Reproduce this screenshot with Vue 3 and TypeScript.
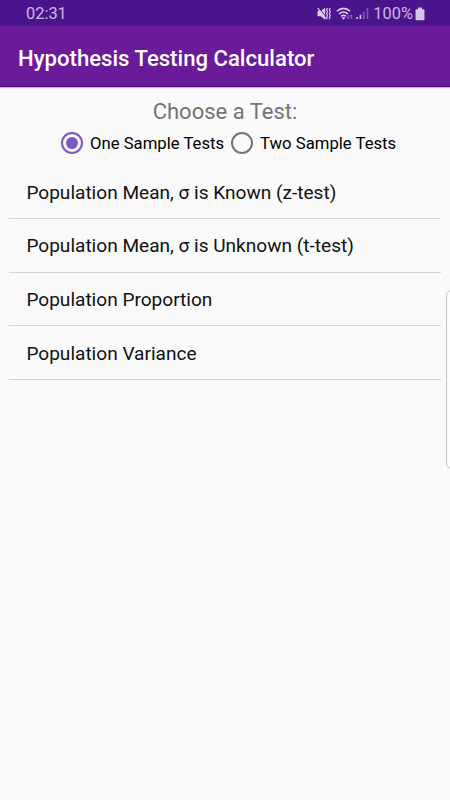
<script setup lang="ts">
import { ref } from 'vue'

const groups: string[] = ['One Sample Tests', 'Two Sample Tests']
const selected = ref<number>(0)
const tests: string[] = [
  'Population Mean, σ is Known (z-test)',
  'Population Mean, σ is Unknown (t-test)',
  'Population Proportion',
  'Population Variance',
]
</script>

<template>
  <div class="screen">
    <div class="status">
      <span class="clock">02:31</span>
      <div class="indicators">
        <svg class="mute" width="15" height="14" viewBox="0 0 15 14">
          <path d="M.5 4h3.200L8.200.8v12L3.700 9.300H.5z" fill="#dccbf0" />
          <path d="M2 .8l7.800 10" stroke="#4a148c" stroke-width="1" />
          <path d="M.7 1.200l8 10.500" stroke="#dccbf0" stroke-width="1.300" />
          <path d="M10.300 1l-.6 1.800.8 1.900-.8 1.900.8 1.900-.8 1.900.6 1.800M13 1l-.6 1.800.8 1.900-.8 1.900.8 1.900-.8 1.900.6 1.800" fill="none" stroke="#dccbf0" stroke-width="1.200" />
        </svg>
        <svg class="wifi" width="18" height="14" viewBox="0 0 18 14">
          <g fill="none" stroke="#dccbf0" stroke-width="1.500">
            <path d="M.8 4.200Q7.500-1.500 14.200 4.200M3 6.900q4.500-3.700 9 0M5 9.300q2.500-2 5 0" />
          </g>
          <path d="M5.700 10.700q1.800-1.200 3.600 0L7.500 12.800z" fill="#dccbf0" />
          <path d="M12 8v4M10.700 10.600L12 12l1.300-1.400M15.300 12V8M14 9.400L15.300 8l1.300 1.400" fill="none" stroke="#8b66b8" stroke-width="1" />
        </svg>
        <svg class="signal" width="13" height="13" viewBox="0 0 13 13">
          <path d="M.3 10h1.700v2H.3zM3.600 7.700h1.700V12H3.600z" fill="#d7c3ec" />
          <path d="M7 4.500h1.700V12H7zM10.600.8h1.700V12h-1.700z" fill="#8058af" />
        </svg>
        <span class="percent">100%</span>
        <svg class="battery" width="10" height="14" viewBox="0 0 10 14">
          <path d="M3 .5h4v1.700h1.500q1 0 1 1v9q0 1-1 1h-7q-1 0-1-1v-9q0-1 1-1H3z" fill="#d7c3ec" />
        </svg>
      </div>
    </div>
    <header class="toolbar"><h1>Hypothesis Testing Calculator</h1></header>
    <main>
      <h2>Choose a Test:</h2>
      <div class="radios" role="radiogroup">
        <div
          v-for="(group, i) in groups"
          :key="group"
          class="radio"
          role="radio"
          :aria-checked="selected === i"
          @click="selected = i"
        >
          <span class="ring" :class="{ checked: selected === i }"></span>
          <span class="radio-label">{{ group }}</span>
        </div>
      </div>
      <ul>
        <li v-for="test in tests" :key="test"><span class="name">{{ test }}</span></li>
      </ul>
    </main>
    <div class="edge-handle"></div>
  </div>
</template>

<style>
body {
  background: #fafafa;
}
</style>

<style scoped>
.screen {
  position: relative;
  width: 450px;
  height: 800px;
  overflow: hidden;
  background: #fafafa;
  font-family: Roboto, sans-serif;
  color: #111;
}
.status {
  display: flex;
  justify-content: space-between;
  align-items: center;
  box-sizing: border-box;
  height: 26px;
  padding: 1px 25px 0 26px;
  background: #4a148c;
  color: #cdb8e6;
  font-size: 16.4px;
  line-height: 24px;
}
.indicators {
  display: flex;
  align-items: center;
}
.wifi {
  margin-left: 4px;
}
.signal {
  margin-left: 2px;
}
.percent {
  margin-left: 4px;
}
.battery {
  margin-left: 2px;
}
.toolbar {
  position: relative;
  display: flex;
  align-items: center;
  box-sizing: border-box;
  height: 61px;
  padding: 4px 18px 0;
  background: #6a1b9a;
  border-bottom: 1px solid #4f1277;
  box-shadow: 0 1px 1px rgba(106, 27, 154, 0.35);
}
h1 {
  margin: 0;
  font-size: 22.13px;
  font-weight: 500;
  line-height: 28px;
  color: #fff;
  white-space: nowrap;
}
h2 {
  margin: 0;
  padding: 11px 0 0;
  font-size: 22px;
  font-weight: 400;
  line-height: 28px;
  text-align: center;
  color: #757575;
}
.radios {
  display: flex;
  padding: 5px 0 0 61px;
  gap: 7px;
}
.radio {
  display: flex;
  align-items: center;
  height: 24px;
}
.ring {
  display: flex;
  align-items: center;
  justify-content: center;
  box-sizing: border-box;
  width: 22px;
  height: 22px;
  border: 2px solid #757575;
  border-radius: 50%;
}
.ring.checked {
  border-color: #7e57c2;
}
.ring.checked::before {
  content: '';
  width: 12px;
  height: 12px;
  border-radius: 50%;
  background: #7e57c2;
}
.radio-label {
  margin-left: 7px;
  padding-top: 2px;
  font-size: 16.7px;
  line-height: 24px;
  color: #000;
  white-space: nowrap;
}
ul {
  margin: 0;
  padding: 10px 9px 0;
  list-style: none;
}
li {
  display: flex;
  align-items: center;
  box-sizing: border-box;
  height: 53.8px;
  padding: 2.600px 0 0 17.400px;
  border-bottom: 1px solid #d9d9d9;
}
.name {
  font-size: 19.07px;
  line-height: 24px;
  white-space: nowrap;
}
.edge-handle {
  position: absolute;
  top: 290px;
  right: -10px;
  box-sizing: border-box;
  width: 14px;
  height: 179px;
  border: 1px solid #c4c4c4;
  border-radius: 6px;
  background: #fdfdfd;
}
</style>
